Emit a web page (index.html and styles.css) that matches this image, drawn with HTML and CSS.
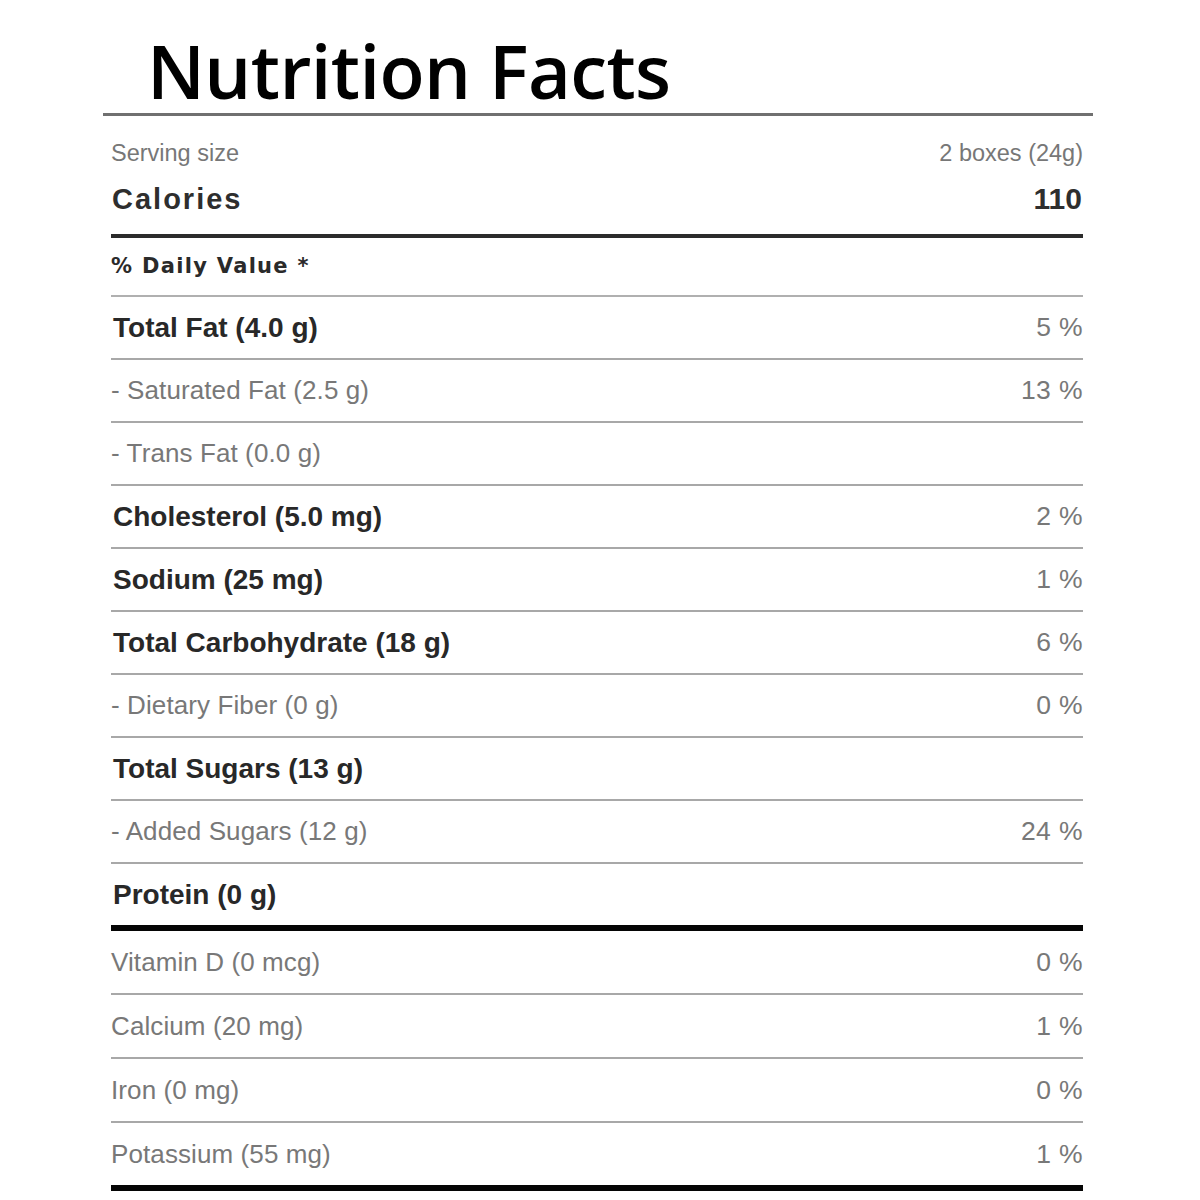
FILE: index.html
```html
<!DOCTYPE html>
<html>
<head>
<meta charset="utf-8">
<link rel="stylesheet" href="styles.css">
</head>
<body>
<div class="page">
  <h1 class="title">Nutrition Facts</h1>
  <div class="title-rule"></div>
  <div class="facts">
    <div class="serving">
      <span>Serving size</span>
      <span>2 boxes (24g)</span>
    </div>
    <div class="calories">
      <span>Calories</span>
      <span class="cal-num">110</span>
    </div>
    <div class="dv">% Daily Value *</div>
    <div class="row"><span class="label main">Total Fat (4.0 g)</span><span class="pct">5 %</span></div>
    <div class="row"><span class="label sub">- Saturated Fat (2.5 g)</span><span class="pct">13 %</span></div>
    <div class="row"><span class="label sub">- Trans Fat (0.0 g)</span><span class="pct"></span></div>
    <div class="row"><span class="label main">Cholesterol (5.0 mg)</span><span class="pct">2 %</span></div>
    <div class="row"><span class="label main">Sodium (25 mg)</span><span class="pct">1 %</span></div>
    <div class="row"><span class="label main">Total Carbohydrate (18 g)</span><span class="pct">6 %</span></div>
    <div class="row"><span class="label sub">- Dietary Fiber (0 g)</span><span class="pct">0 %</span></div>
    <div class="row"><span class="label main">Total Sugars (13 g)</span><span class="pct"></span></div>
    <div class="row"><span class="label sub">- Added Sugars (12 g)</span><span class="pct">24 %</span></div>
    <div class="row thick"><span class="label main">Protein (0 g)</span><span class="pct"></span></div>
    <div class="row low"><span class="label sub">Vitamin D (0 mcg)</span><span class="pct">0 %</span></div>
    <div class="row low"><span class="label sub">Calcium (20 mg)</span><span class="pct">1 %</span></div>
    <div class="row low"><span class="label sub">Iron (0 mg)</span><span class="pct">0 %</span></div>
    <div class="row low thick"><span class="label sub">Potassium (55 mg)</span><span class="pct">1 %</span></div>
  </div>
</div>
</body>
</html>
```

FILE: styles.css
```css
html, body {
  margin: 0;
  padding: 0;
  background: #ffffff;
}

.page {
  width: 1200px;
  height: 1200px;
  overflow: hidden;
  font-family: "Liberation Sans", Arial, sans-serif;
}

.title {
  margin: 0;
  padding: 29px 0 0 147px;
  font-family: "Open Sans", sans-serif;
  font-weight: 600;
  font-size: 74px;
  line-height: 84px;
  color: #000;
  letter-spacing: -0.6px;
}

.title-rule {
  margin: 0 107px 0 103px;
  height: 3px;
  background: #707070;
}

.facts {
  margin: 0 117px 0 111px;
}

.serving {
  display: flex;
  justify-content: space-between;
  padding-top: 19px;
  height: 36px;
  line-height: 36px;
  font-size: 23.5px;
  color: #777;
}

.calories {
  display: flex;
  justify-content: space-between;
  margin-top: 8px;
  height: 40px;
  line-height: 40px;
  font-size: 29px;
  font-weight: bold;
  color: #2e2e2e;
  padding-bottom: 15px;
  border-bottom: 4px solid #2b2b2b;
}

.calories span:first-child {
  letter-spacing: 2px;
  padding-left: 1px;
}

.cal-num {
  font-size: 30px;
  padding-right: 1px;
}

.dv {
  height: 57px;
  line-height: 57px;
  font-family: "DejaVu Sans", sans-serif;
  font-weight: bold;
  font-size: 21px;
  color: #2a2a2a;
  letter-spacing: 1.3px;
  border-bottom: 2px solid #b0b0b0;
}

.row {
  display: flex;
  justify-content: space-between;
  align-items: center;
  height: 61px;
  border-bottom: 2px solid #a8a8a8;
}

.row.low {
  height: 62px;
}

.row.thick {
  border-bottom: 6px solid #050505;
}

.label.main {
  font-size: 28px;
  font-weight: bold;
  color: #282828;
  padding-left: 2px;
}

.label.sub {
  font-size: 26px;
  color: #787878;
  letter-spacing: 0.1px;
}

.pct {
  font-size: 26.5px;
  color: #787878;
  letter-spacing: 0.4px;
}
```
